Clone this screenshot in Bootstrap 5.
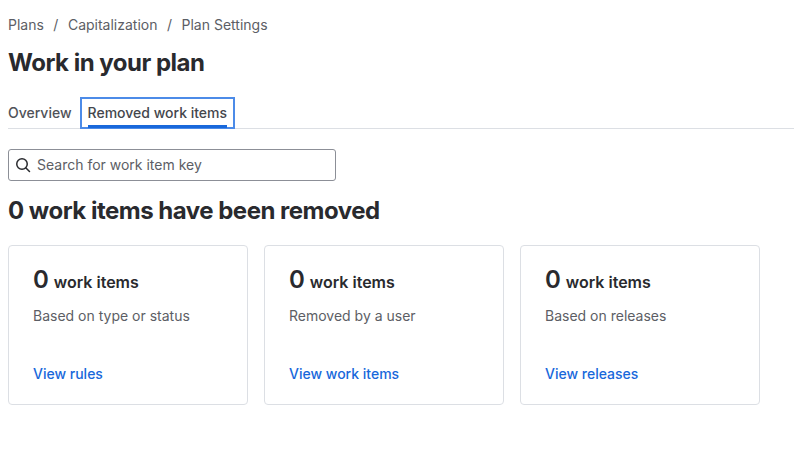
<!doctype html>
<html lang="en">
<head>
<meta charset="utf-8">
<title>Work in your plan</title>
<link href="https://cdn.jsdelivr.net/npm/bootstrap@5.3.0/dist/css/bootstrap.min.css" rel="stylesheet">
<style>
html,body{background:#fff;}
body{font-family:Inter,"Liberation Sans",sans-serif;color:#292a2e;padding:15px 0 0 8px;font-size:14px;line-height:20px;overflow:hidden;}
.crumbs{--bs-breadcrumb-divider:'/';--bs-breadcrumb-margin-bottom:0;--bs-breadcrumb-item-padding-x:9.5px;height:20px;}
.crumbs .breadcrumb-item,.crumbs .breadcrumb-item::before{color:#5c5e65;}
.crumbs a{color:#5c5e65;text-decoration:none;}
.page-title{font-size:24px;line-height:28px;font-weight:650;margin:14px 0 0;color:#292a2e;letter-spacing:-.5px;}
.tabbar{margin:20px 0 0 0;height:32px;border-bottom:1px solid #dcdfe4;gap:8px;}
.tabbar .tabitem{color:#505258;font-weight:500;text-decoration:none;padding:1px 0 0;height:31px;display:flex;align-items:center;position:relative;}
.tabbar .tabfocus{padding:0 6px;border:2px solid #4c8be8;height:32px;color:#44464c;}
.tabfocus::after{content:"";position:absolute;left:6px;right:6px;bottom:-1px;height:3px;background:#1868db;}
.finder{width:328px;height:32px;margin-top:20px;border:1px solid #8c8f97;border-radius:3px;padding:0 8px;gap:4px;color:#505258;}
.finder svg{margin-left:-2px;flex:none;}
.finder input{border:0;outline:0;padding:0;flex:1;min-width:0;font:inherit;color:#292a2e;background:transparent;margin-left:2px;}
.finder input::placeholder{color:#5c5e65;opacity:1;}
.sub-title{font-size:24px;line-height:28px;font-weight:650;margin:16px 0 0;color:#292a2e;letter-spacing:-.5px;}
.stat-row{margin-top:20px;gap:16px;}
.stat-box{width:240px;height:160px;border:1px solid #dcdfe4;border-radius:4px;padding:18px 24px 0;--bs-card-bg:#fff;}
.stat-num{font-size:24px;line-height:32px;font-weight:600;}
.stat-unit{font-size:16px;font-weight:600;margin-left:1px;}
.stat-desc{color:#5c5e65;margin-top:10px;}
.stat-link{color:#1868db;font-weight:500;text-decoration:none;margin-top:38px;display:block;}
</style>
</head>
<body>
<nav aria-label="breadcrumb">
  <ol class="breadcrumb crumbs">
    <li class="breadcrumb-item"><a href="#">Plans</a></li>
    <li class="breadcrumb-item"><a href="#">Capitalization</a></li>
    <li class="breadcrumb-item"><a href="#">Plan Settings</a></li>
  </ol>
</nav>
<h1 class="page-title">Work in your plan</h1>
<div class="tabbar d-flex">
  <a class="tabitem" href="#">Overview</a>
  <a class="tabitem tabfocus" href="#">Removed work items</a>
</div>
<label class="finder d-flex align-items-center">
  <svg width="16" height="16" viewBox="0 0 16 16" fill="none" stroke="#292a2e" stroke-width="1.5" stroke-linecap="round"><circle cx="7" cy="7" r="5.25"/><path d="M11 11l3.5 3.5"/></svg>
  <input type="text" placeholder="Search for work item key" aria-label="Search for work item key">
</label>
<h2 class="sub-title">0 work items have been removed</h2>
<div class="stat-row d-flex">
  <div class="card stat-box">
    <div><span class="stat-num">0</span> <span class="stat-unit">work items</span></div>
    <div class="stat-desc">Based on type or status</div>
    <a class="stat-link" href="#">View rules</a>
  </div>
  <div class="card stat-box">
    <div><span class="stat-num">0</span> <span class="stat-unit">work items</span></div>
    <div class="stat-desc">Removed by a user</div>
    <a class="stat-link" href="#">View work items</a>
  </div>
  <div class="card stat-box">
    <div><span class="stat-num">0</span> <span class="stat-unit">work items</span></div>
    <div class="stat-desc">Based on releases</div>
    <a class="stat-link" href="#">View releases</a>
  </div>
</div>
<script src="https://cdn.jsdelivr.net/npm/bootstrap@5.3.0/dist/js/bootstrap.bundle.min.js"></script>
</body>
</html>
